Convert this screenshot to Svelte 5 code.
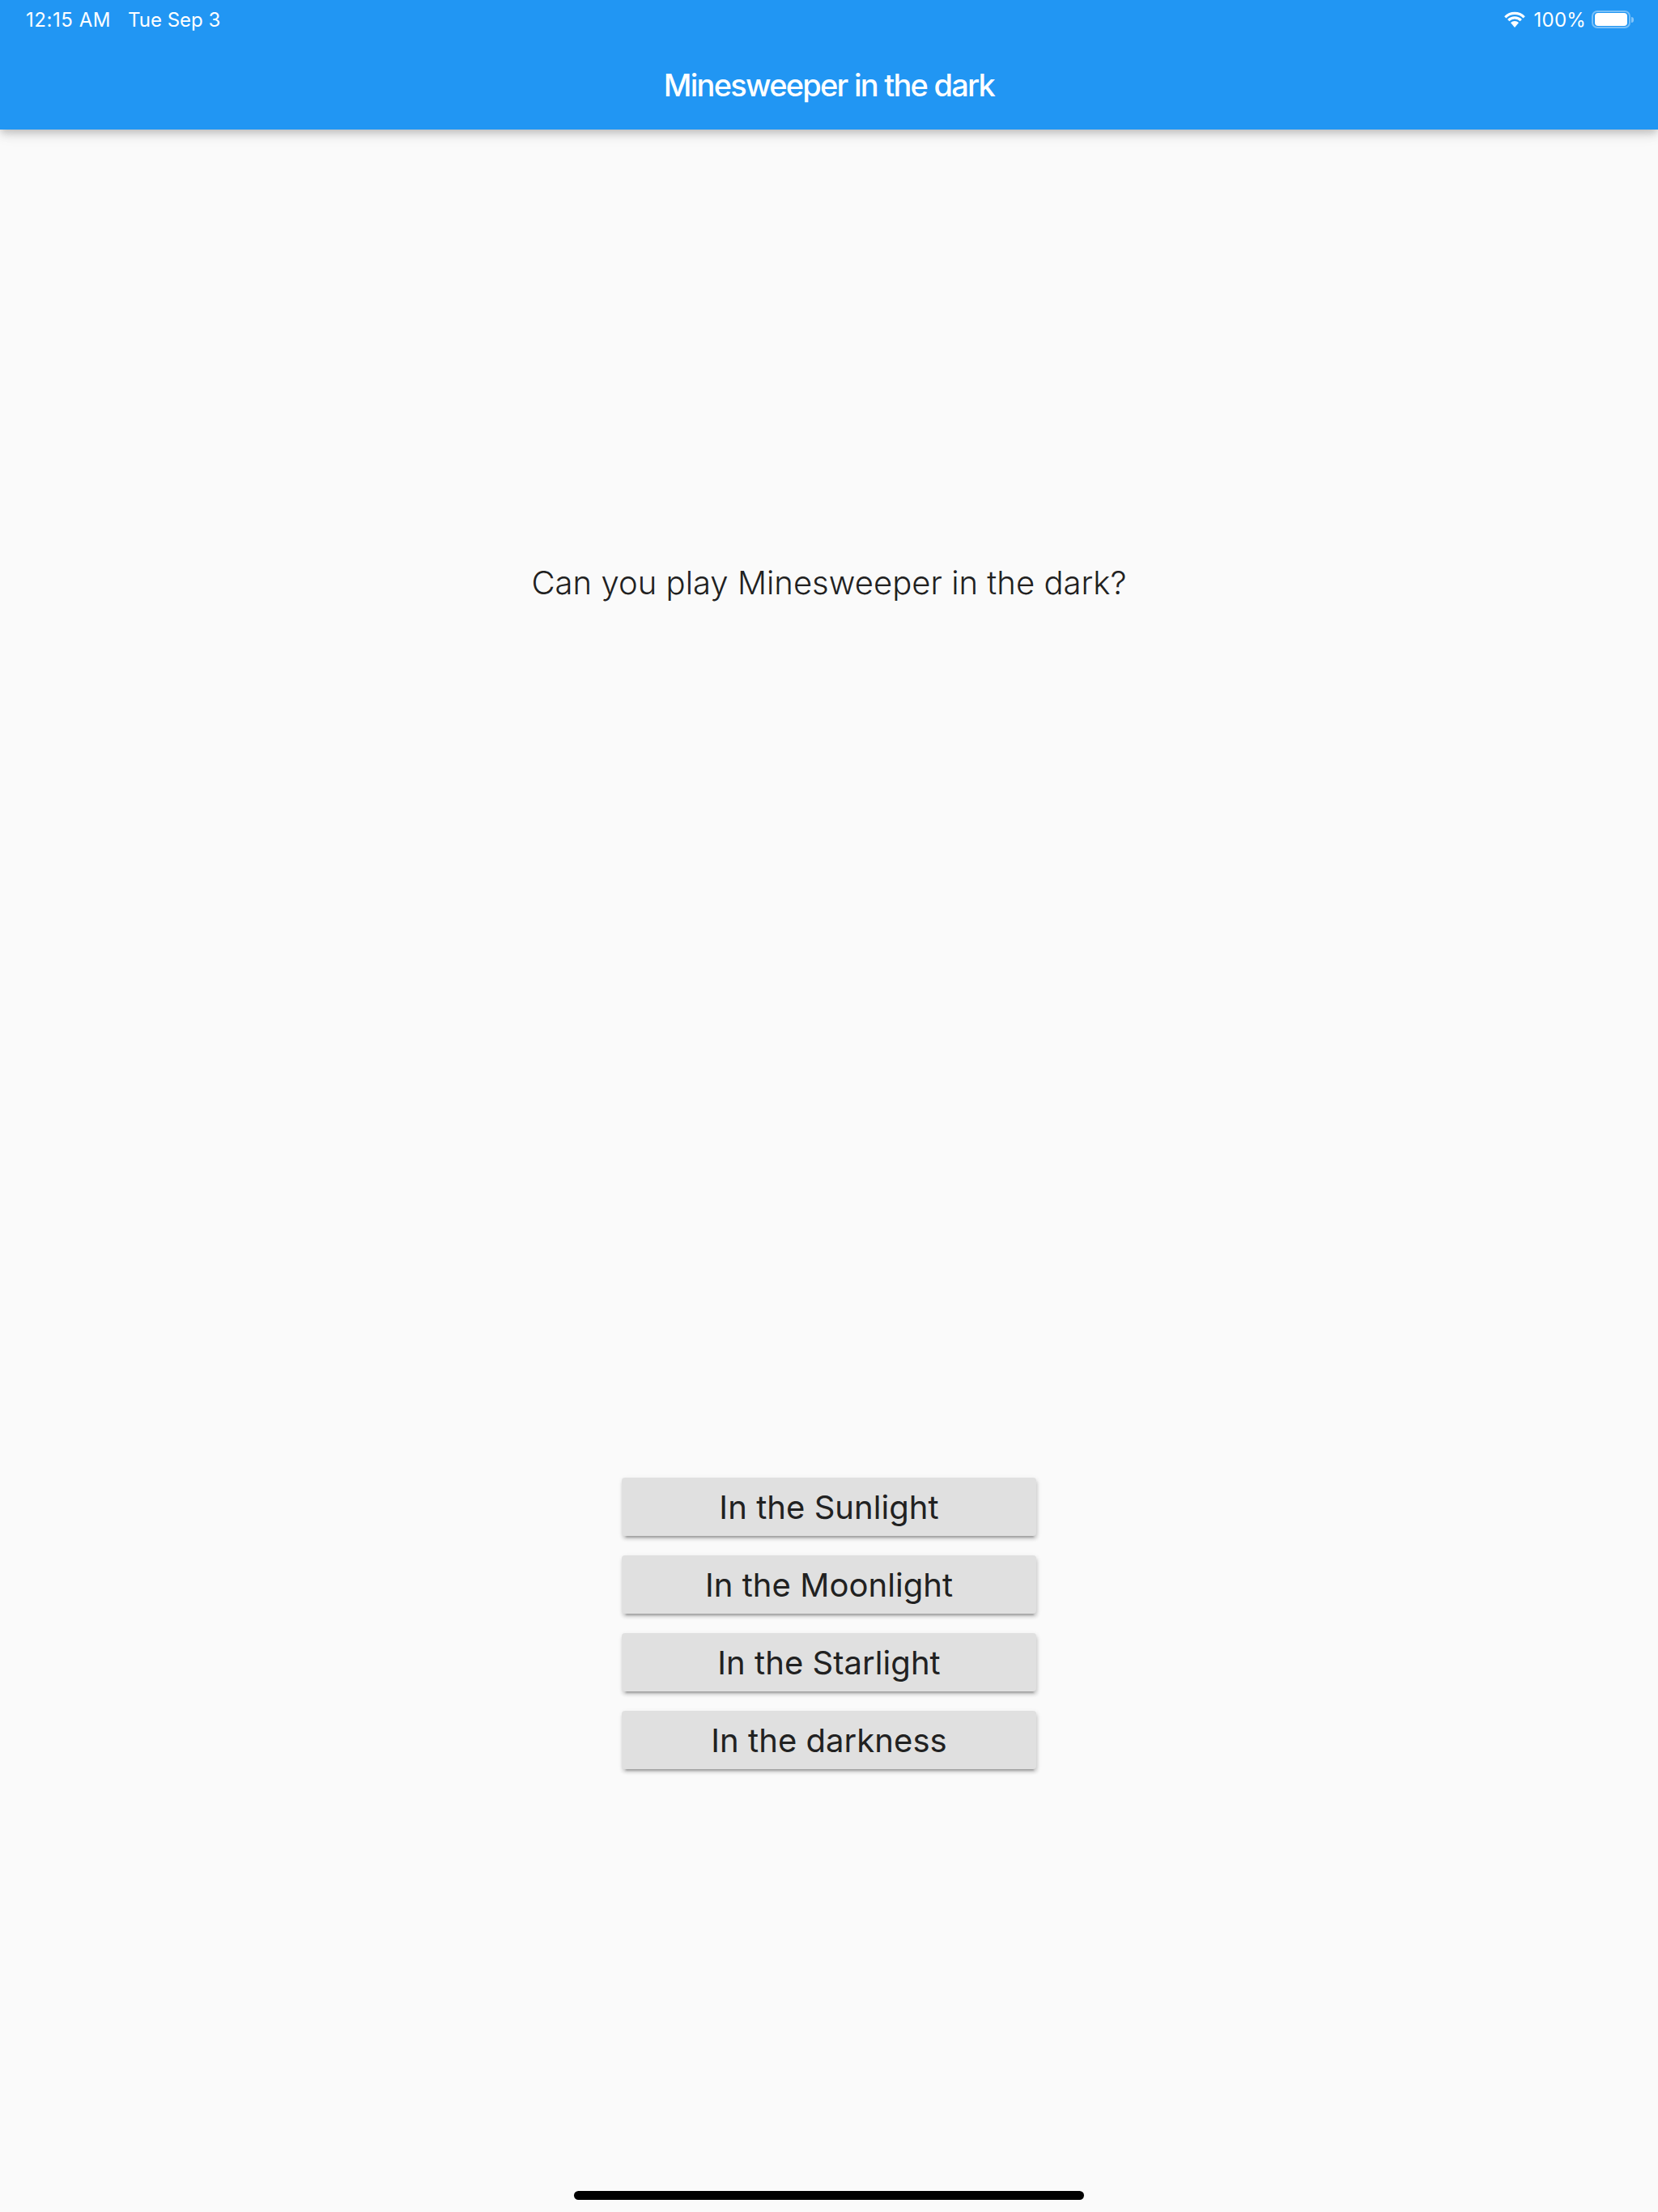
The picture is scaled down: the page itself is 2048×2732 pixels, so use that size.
<script>
  const answers = ["In the Sunlight", "In the Moonlight", "In the Starlight", "In the darkness"];
</script>

<div class="screen">
  <header class="app-bar">
    <div class="status">
      <div class="status-left">
        <span class="time">12:15 AM</span>
        <span>Tue Sep 3</span>
      </div>
      <div class="status-right">
        <svg class="wifi" width="28" height="20" viewBox="0 0 28 20">
          <path d="M2.300 7.300A16.500 16.500 0 0 1 25.700 7.300" fill="none" stroke="#fff" stroke-width="3.2" />
          <path d="M6.200 11.200A11 11 0 0 1 21.800 11.200" fill="none" stroke="#fff" stroke-width="3.2" />
          <path d="M14 20L9 14.100A7 7 0 0 1 19 14.100Z" fill="#fff" />
        </svg>
        <span>100%</span>
        <div class="battery">
          <div class="battery-body"><div class="battery-fill"></div></div>
          <div class="battery-nub"></div>
        </div>
      </div>
    </div>
    <h1 class="title">Minesweeper in the dark</h1>
  </header>

  <main class="content">
    <p class="question">Can you play Minesweeper in the dark?</p>
    <div class="buttons">
      {#each answers as answer}
        <button class="answer">{answer}</button>
      {/each}
    </div>
  </main>

  <div class="home-bar"></div>
</div>

<style>
  :global(body) {
    margin: 0;
    background: #fafafa;
  }

  .screen {
    position: relative;
    display: flex;
    flex-direction: column;
    height: 2732px;
    background: #fafafa;
    font-family: Inter, "Liberation Sans", sans-serif;
    overflow: hidden;
  }

  .app-bar {
    height: 160px;
    flex-shrink: 0;
    background: #2196f3;
    color: #fff;
    box-shadow: 0 4px 8px -2px rgba(0, 0, 0, 0.14), 0 8px 10px rgba(0, 0, 0, 0.08), 0 2px 20px rgba(0, 0, 0, 0.1);
    z-index: 1;
  }

  .status {
    display: flex;
    justify-content: space-between;
    align-items: center;
    height: 48px;
    padding: 0 30px 0 32px;
    font-size: 24px;
  }

  .status-left {
    display: flex;
    gap: 21px;
  }

  .time {
    letter-spacing: 0.55px;
  }

  .status-right {
    display: flex;
    align-items: center;
    gap: 10px;
    letter-spacing: 0.2px;
  }

  .wifi {
    display: block;
  }

  .battery {
    display: flex;
    align-items: center;
    margin-left: -3px;
  }

  .battery-body {
    box-sizing: border-box;
    width: 48px;
    height: 22px;
    padding: 1px 2px;
    border: 2px solid rgba(255, 255, 255, 0.4);
    border-radius: 7px;
  }

  .battery-fill {
    height: 100%;
    background: #fff;
    border-radius: 4px;
  }

  .battery-nub {
    width: 3px;
    height: 7px;
    margin-left: 1px;
    background: rgba(255, 255, 255, 0.45);
    border-radius: 0 3px 3px 0;
  }

  .title {
    margin: 0;
    padding-top: 33px;
    text-align: center;
    font-size: 38px;
    line-height: 48px;
    font-weight: 500;
    letter-spacing: -1.75px;
  }

  .content {
    flex: 1;
    display: flex;
    flex-direction: column;
    align-items: center;
  }

  .question {
    margin: 532px 0 0;
    font-size: 40px;
    line-height: 56px;
    font-weight: 300;
    letter-spacing: 0.03px;
    color: #212121;
  }

  .buttons {
    display: flex;
    flex-direction: column;
    gap: 24px;
    margin-top: 1077px;
  }

  .answer {
    width: 512px;
    height: 72px;
    padding: 0;
    border: 0;
    border-radius: 4px;
    background: #e0e0e0;
    color: #212121;
    font: 400 40px Inter, "Liberation Sans", sans-serif;
    letter-spacing: 0.05px;
    box-shadow: 1px 4px 4px rgba(0, 0, 0, 0.14), 1px 2px 6px rgba(0, 0, 0, 0.1), 1px 6px 2px -4px rgba(0, 0, 0, 0.2);
  }

  .home-bar {
    position: absolute;
    left: 709px;
    bottom: 15px;
    width: 630px;
    height: 11px;
    border-radius: 6px;
    background: #000;
  }
</style>
